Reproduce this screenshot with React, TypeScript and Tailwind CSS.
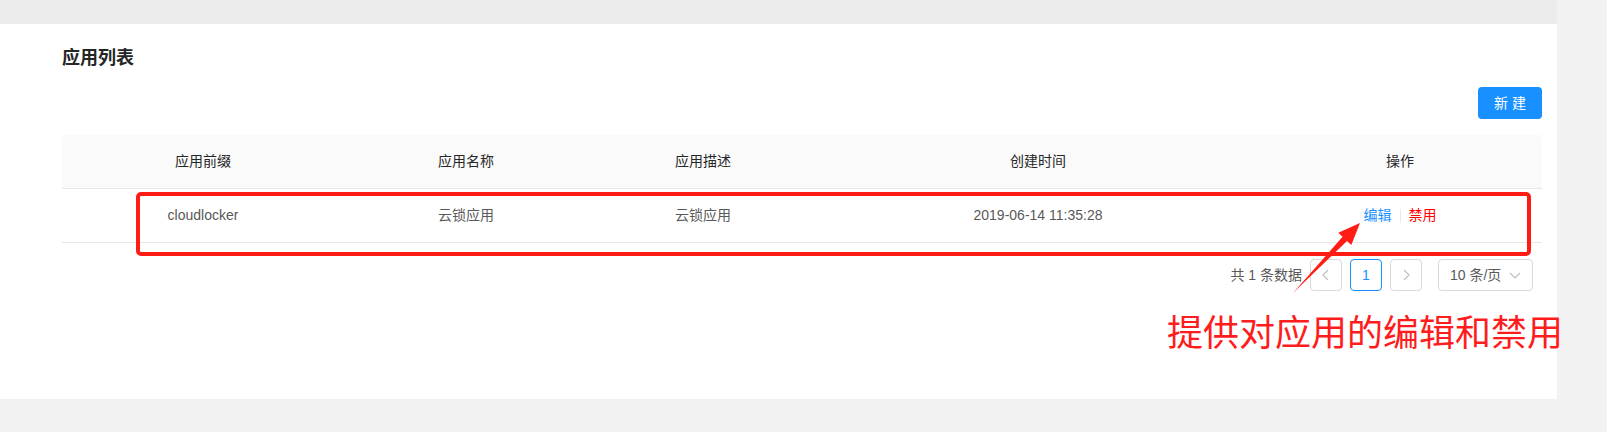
import React from 'react';

const columns = ['应用前缀', '应用名称', '应用描述', '创建时间', '操作'];

const Chevron: React.FC<{ dir: 'left' | 'right' | 'down' }> = ({ dir }) => {
  const pts =
    dir === 'left' ? '8,1 3,6 8,11' : dir === 'right' ? '4,1 9,6 4,11' : '1,4 6,9 11,4';
  return (
    <svg width="12" height="12" viewBox="0 0 12 12" fill="none">
      <polyline points={pts} stroke="#bfbfbf" strokeWidth="1.1" strokeLinejoin="round" />
    </svg>
  );
};

const App: React.FC = () => {
  return (
    <div className="relative w-[1607px] h-[432px] bg-[#f2f2f2] font-['Liberation_Sans','Noto_Sans_CJK_SC',sans-serif] text-[14px] overflow-hidden">
      <div className="flex">
        <div className="w-[1557px]">
          <div className="h-[24px] bg-[#ececec]" />
          <div className="h-[375px] bg-white pl-[62px] pr-[15px]">
            <h1 className="pt-[20px] h-[48px] leading-[28px] text-[18px] font-bold text-[#262626]">应用列表</h1>

            <div className="mt-[15px] flex justify-end">
              <button className="h-[32px] w-[64px] rounded-[4px] bg-[#1890ff] text-white text-[14px]">
                新 建
              </button>
            </div>

            <div className="mt-[16px]">
              <div className="grid grid-cols-[282px_244px_230px_440px_284px] h-[54px] items-center bg-[#fafafa] rounded-t-[4px] border-b border-[#e8e8e8] text-[#262626]">
                {columns.map((c) => (
                  <div key={c} className="text-center">{c}</div>
                ))}
              </div>
              <div className="grid grid-cols-[282px_244px_230px_440px_284px] h-[54px] items-center border-b border-[#e8e8e8] text-[#595959]">
                <div className="text-center">cloudlocker</div>
                <div className="text-center">云锁应用</div>
                <div className="text-center">云锁应用</div>
                <div className="text-center">2019-06-14 11:35:28</div>
                <div className="flex justify-center items-center">
                  <span className="text-[#1890ff]">编辑</span>
                  <span className="mx-[8px] w-px h-[14px] bg-[#e8e8e8]" />
                  <span className="text-[#ff0000]">禁用</span>
                </div>
              </div>
            </div>

            <div className="mt-[16px] mr-[9px] flex justify-end items-center gap-[8px] text-[#595959]">
              <span>共 1 条数据</span>
              <div className="w-[32px] h-[32px] rounded-[4px] border border-[#d9d9d9] flex items-center justify-center">
                <Chevron dir="left" />
              </div>
              <div className="w-[32px] h-[32px] rounded-[4px] border border-[#1890ff] text-[#1890ff] flex items-center justify-center">
                1
              </div>
              <div className="w-[32px] h-[32px] rounded-[4px] border border-[#d9d9d9] flex items-center justify-center">
                <Chevron dir="right" />
              </div>
              <div className="ml-[8px] w-[95px] h-[32px] rounded-[4px] border border-[#d9d9d9] flex items-center justify-between pl-[11px] pr-[11px]">
                <span>10 条/页</span>
                <Chevron dir="down" />
              </div>
            </div>
          </div>
        </div>
        <div className="flex-1 h-[432px] bg-[#f2f2f2]" />
      </div>

      {/* annotation overlay */}
      <div className="absolute left-[136px] top-[192px] w-[1395px] h-[64px] border-[4px] border-[#ff1c14] rounded-[5px]" />
      <svg className="absolute left-0 top-0 pointer-events-none" width="1607" height="432" viewBox="0 0 1607 432">
        <polygon
          points="1293,293 1342.6,236.8 1338.3,232.7 1360,223 1351.3,245.1 1347,241"
          fill="#ff1c14"
        />
      </svg>
      <div className="absolute left-[1167px] top-[312px] leading-none text-[36px] text-[#ff1c1c] font-['Noto_Sans_CJK_SC',sans-serif] whitespace-nowrap">
        提供对应用的编辑和禁用
      </div>
    </div>
  );
};

export default App;
